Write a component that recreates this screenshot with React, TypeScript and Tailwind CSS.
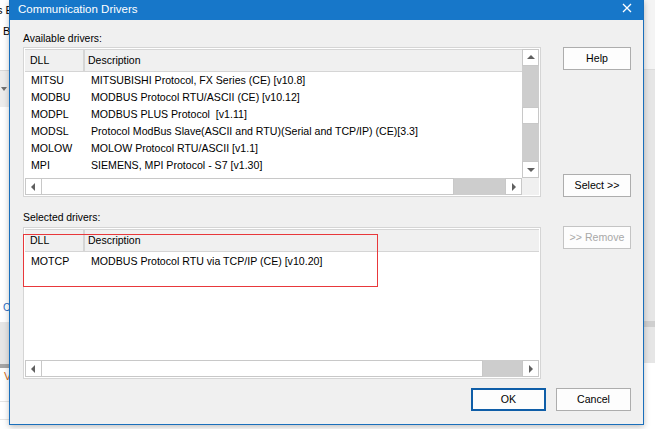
import React from "react";

const UI = { fontFamily: '"Liberation Sans", Arial, sans-serif' };
const LIST = { fontFamily: '"Liberation Sans", Arial, sans-serif' };

const rows: [string, string][] = [
  ["MITSU", "MITSUBISHI Protocol, FX Series (CE) [v10.8]"],
  ["MODBU", "MODBUS Protocol RTU/ASCII (CE) [v10.12]"],
  ["MODPL", "MODBUS PLUS Protocol  [v1.11]"],
  ["MODSL", "Protocol ModBus Slave(ASCII and RTU)(Serial and TCP/IP) (CE)[3.3]"],
  ["MOLOW", "MOLOW Protocol RTU/ASCII [v1.1]"],
  ["MPI", "SIEMENS, MPI Protocol - S7 [v1.30]"],
];

function Arrow({ dir }: { dir: "up" | "down" | "left" | "right" }) {
  const pts =
    dir === "up"
      ? "1,6 5,2 9,6"
      : dir === "down"
      ? "1,3 9,3 5,7"
      : dir === "left"
      ? "6,1 6,9 2,5"
      : "3,1 3,9 7,5";
  return (
    <svg width="10" height="10" viewBox="0 0 10 10">
      <polygon points={pts} fill="#606060" />
    </svg>
  );
}

function ArrowBox({ dir }: { dir: "up" | "down" | "left" | "right" }) {
  return (
    <div className="w-[17px] h-[17px] shrink-0 bg-white border border-[#c8c8c8] flex items-center justify-center">
      <Arrow dir={dir} />
    </div>
  );
}

function Header() {
  return (
    <div className="h-[23px] flex bg-[#f0f0f0] border-t border-b border-[#d5d5d5] text-[10.5px] text-black" style={UI}>
      <div className="w-[60px] pl-[5px] border-r-2 border-[#d5d5d5] flex items-center">DLL</div>
      <div className="pl-[3px] flex items-center">Description</div>
    </div>
  );
}

function Row({ dll, desc }: { dll: string; desc: string }) {
  return (
    <div className="h-[17px] flex items-center text-[10.6px] text-black whitespace-pre" style={LIST}>
      <div className="w-[60px] pl-[6px]">{dll}</div>
      <div className="pl-[6px]">{desc}</div>
    </div>
  );
}

function HScroll({ thumb, gray }: { thumb: number; gray: number }) {
  return (
    <div className="h-[17px] flex flex-1">
      <ArrowBox dir="left" />
      <div className="h-[17px] bg-white border border-[#c8c8c8] border-l-0" style={{ width: thumb }} />
      <div className="h-[17px] bg-[#cdcdcd]" style={{ width: gray }} />
      <ArrowBox dir="right" />
    </div>
  );
}

function Btn({ label, disabled, primary }: { label: string; disabled?: boolean; primary?: boolean }) {
  return (
    <div
      className={
        "h-[23px] flex items-center justify-center text-[10.6px] bg-[#fdfdfd] border " +
        (primary ? "border-[#0f5ea8] border-2" : disabled ? "border-[#c4c4c4]" : "border-[#adadad]") +
        (disabled ? " text-[#a8a8a8]" : " text-black")
      }
      style={UI}
    >
      {label}
    </div>
  );
}

function LeftStrip() {
  return (
    <div className="w-[9px] h-[429px] shrink-0 flex flex-col bg-white overflow-hidden text-[11px] text-black" style={UI}>
      <div className="h-[20px] flex items-center whitespace-pre ml-[-3px]">s E</div>
      <div className="h-[22px] flex items-center pl-[3px]">B</div>
      <div className="h-[28px]" />
      <div className="h-[37px] bg-[#ececec] border-t border-[#d8d8d8] flex items-center pl-[1px]">
        <svg width="6" height="4" viewBox="0 0 6 4"><polygon points="0,0 6,0 3,4" fill="#707070" /></svg>
      </div>
      <div className="h-[196px]" />
      <div className="h-[9px] flex items-center gap-[1px] pl-[1px]">
        <div className="w-[2px] h-[5px] bg-[#1aa33a]" />
        <div className="w-[1px] h-[3px] bg-black" />
        <span className="text-[#2a6cc0] text-[10px] leading-none">C</span>
      </div>
      <div className="h-[10px]" />
      <div className="h-[42px] bg-[#e6e6e6]" />
      <div className="h-[4px] bg-[#a5a5a5]" />
      <div className="h-[16px] flex items-center pl-[4px] text-[#d2691e]">V</div>
      <div className="h-[18px] border-b border-[#e5e5e5]" />
      <div className="h-[18px] border-b border-[#e5e5e5]" />
      <div className="flex-1" />
    </div>
  );
}

function RightStrip() {
  return (
    <div className="flex-1 h-[429px] flex flex-col">
      <div className="h-[70px] bg-[#f4f4f4] border-b border-[#dcdcdc]" />
      <div className="h-[251px] bg-[#e6e6e6]" />
      <div className="h-[6px] bg-[#cfcfcf]" />
      <div className="h-[36px] bg-[#e6e6e6]" />
      <div className="flex-1 bg-white" />
    </div>
  );
}

export default function App() {
  return (
    <div className="w-[655px] h-[429px] overflow-hidden flex bg-white">
      <LeftStrip />
      <div className="w-[635px] h-[425px] shrink-0 flex flex-col border border-t-0 border-[#1a6fbb] shadow-[0_2px_6px_rgba(0,0,0,0.25)] z-10">
        <div className="h-[20px] shrink-0 bg-[#1777c9] flex items-center justify-between pl-[8px] pr-[11px]">
          <span className="text-white text-[11.5px]" style={UI}>Communication Drivers</span>
          <svg width="10" height="10" viewBox="0 0 10 10" className="mb-[5px]">
            <path d="M1 1 L9 9 M9 1 L1 9" stroke="white" strokeWidth="1.3" />
          </svg>
        </div>
        <div className="flex-1 bg-[#f0f0f0] flex flex-col pt-[11px] pl-[13px] pr-[11px]">
          <div className="flex">
            <div className="w-[518px] flex flex-col">
              <div className="h-[16px] flex items-center text-[10.4px] text-black" style={UI}>Available drivers:</div>
              <div className="border border-[#d5d5d5] p-[1px] bg-white flex flex-col">
                <div className="h-[129px] flex">
                  <div className="flex-1 flex flex-col">
                    <Header />
                    {rows.map(([d, s]) => (
                      <Row key={d} dll={d} desc={s} />
                    ))}
                  </div>
                  <div className="w-[17px] flex flex-col bg-[#cdcdcd]">
                    <ArrowBox dir="up" />
                    <div className="h-[41px]" />
                    <div className="h-[17px] bg-white border border-[#c8c8c8]" />
                    <div className="flex-1" />
                    <ArrowBox dir="down" />
                  </div>
                </div>
                <div className="flex">
                  <HScroll thumb={412} gray={51} />
                  <div className="w-[17px] h-[17px] bg-[#f0f0f0]" />
                </div>
              </div>
              <div className="h-[16px] mt-[13px] flex items-center text-[10.4px] text-black" style={UI}>Selected drivers:</div>
              <div className="relative mt-[1px] border border-[#d5d5d5] p-[1px] bg-white flex flex-col">
                <div className="h-[131px] flex flex-col">
                  <Header />
                  <div className="mt-[1px]">
                    <Row dll="MOTCP" desc="MODBUS Protocol RTU via TCP/IP (CE) [v10.20]" />
                  </div>
                </div>
                <div className="flex">
                  <HScroll thumb={441} gray={39} />
                </div>
                <div className="absolute left-[-1px] top-[6px] w-[355px] h-[53px] border border-[#e8383b]" />
              </div>
            </div>
            <div className="ml-[22px] w-[68px] flex flex-col pt-[16px]">
              <Btn label="Help" />
              <div className="mt-[104px]">
                <Btn label="Select >>" />
              </div>
              <div className="mt-[29px]">
                <Btn label=">> Remove" disabled />
              </div>
            </div>
          </div>
          <div className="flex justify-end mt-[9px] gap-[10px] pr-[1px]">
            <div className="w-[75px]">
              <Btn label="OK" primary />
            </div>
            <div className="w-[75px]">
              <Btn label="Cancel" />
            </div>
          </div>
        </div>
      </div>
      <RightStrip />
    </div>
  );
}
